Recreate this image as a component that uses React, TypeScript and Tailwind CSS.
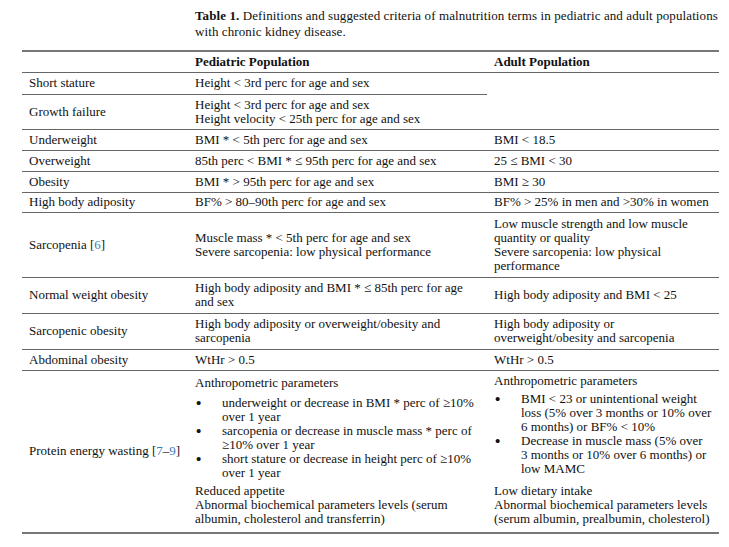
import type { ReactNode } from "react";

const line = "border-b border-[#666]";

function Ref({ children }: { children: ReactNode }) {
  return <span className="text-[#3b78b5]">{children}</span>;
}

function Lines({ lines }: { lines: ReactNode[] }) {
  return (
    <div>
      {lines.map((l, i) => (
        <div key={i} className="whitespace-nowrap">
          {l}
        </div>
      ))}
    </div>
  );
}

function Bullet({ lines }: { lines: ReactNode[] }) {
  return (
    <div className="flex">
      <span className="w-[27px] shrink-0 pl-[1px] text-[15px] font-bold leading-[14px]">•</span>
      <Lines lines={lines} />
    </div>
  );
}

interface Row {
  term: ReactNode;
  ped: ReactNode[];
  adult?: ReactNode[];
  h: string;
}

const rows: Row[] = [
  { term: "Underweight", ped: ["BMI * < 5th perc for age and sex"], adult: ["BMI < 18.5"], h: "h-[21px]" },
  { term: "Overweight", ped: ["85th perc < BMI * ≤ 95th perc for age and sex"], adult: ["25 ≤ BMI < 30"], h: "h-[21px]" },
  { term: "Obesity", ped: ["BMI * > 95th perc for age and sex"], adult: ["BMI ≥ 30"], h: "h-[21px]" },
  { term: "High body adiposity", ped: ["BF% > 80–90th perc for age and sex"], adult: ["BF% > 25% in men and >30% in women"], h: "h-[20px]" },
  {
    term: (
      <>
        Sarcopenia [<Ref>6</Ref>]
      </>
    ),
    ped: ["Muscle mass * < 5th perc for age and sex", "Severe sarcopenia: low physical performance"],
    adult: ["Low muscle strength and low muscle", "quantity or quality", "Severe sarcopenia: low physical", "performance"],
    h: "h-[65px]",
  },
  {
    term: "Normal weight obesity",
    ped: ["High body adiposity and BMI * ≤ 85th perc for age", "and sex"],
    adult: ["High body adiposity and BMI < 25"],
    h: "h-[36px]",
  },
  {
    term: "Sarcopenic obesity",
    ped: ["High body adiposity or overweight/obesity and", "sarcopenia"],
    adult: ["High body adiposity or", "overweight/obesity and sarcopenia"],
    h: "h-[36px]",
  },
  { term: "Abdominal obesity", ped: ["WtHr > 0.5"], adult: ["WtHr > 0.5"], h: "h-[21px]" },
];

export default function App() {
  return (
    <div className="min-h-[547px] w-[729px] bg-white font-['Liberation_Serif',serif] text-[13px] leading-[14px] text-[#111]">
      <div className="pl-[195px] pt-[8px] leading-[16px]">
        <div className="whitespace-nowrap tracking-[0.1px]">
          <b>Table 1.</b> Definitions and suggested criteria of malnutrition terms in pediatric and adult populations
        </div>
        <div className="tracking-[0.1px]">with chronic kidney disease.</div>
      </div>

      <table className="ml-[22px] mt-[10px] w-[697px] border-collapse border-y-2 border-[#777]">
        <colgroup>
          <col className="w-[166px]" />
          <col className="w-[299px]" />
          <col className="w-[232px]" />
        </colgroup>
        <tbody>
          <tr className={`h-[21px] ${line} border-[#222] font-bold`}>
            <td />
            <td className="px-[7px]">Pediatric Population</td>
            <td className="px-[7px]">Adult Population</td>
          </tr>
          <tr className="h-[22px]">
            <td className={`px-[7px] ${line} border-[#222]`}>Short stature</td>
            <td className={`px-[7px] ${line} border-[#222]`}>Height &lt; 3rd perc for age and sex</td>
            <td rowSpan={2} className={line} />
          </tr>
          <tr className="h-[35px]">
            <td className={`px-[7px] ${line}`}>Growth failure</td>
            <td className={`px-[7px] ${line}`}>
              <Lines lines={["Height < 3rd perc for age and sex", "Height velocity < 25th perc for age and sex"]} />
            </td>
          </tr>
          {rows.map((r, i) => (
            <tr key={i} className={`${r.h} ${line}`}>
              <td className="px-[7px]">{r.term}</td>
              <td className="px-[7px]">
                <Lines lines={r.ped} />
              </td>
              <td className="px-[7px]">{r.adult && <Lines lines={r.adult} />}</td>
            </tr>
          ))}
          <tr className="h-[163px]">
            <td className="px-[7px]">
              Protein energy wasting [<Ref>7</Ref>–<Ref>9</Ref>]
            </td>
            <td className="px-[7px] pt-[5px] align-top">
              <div>Anthropometric parameters</div>
              <div className="mt-[6px]">
                <Bullet lines={["underweight or decrease in BMI * perc of ≥10%", "over 1 year"]} />
                <Bullet lines={["sarcopenia or decrease in muscle mass * perc of", "≥10% over 1 year"]} />
                <Bullet lines={["short stature or decrease in height perc of ≥10%", "over 1 year"]} />
              </div>
              <div className="mt-[4px]">Reduced appetite</div>
              <div>Abnormal biochemical parameters levels (serum</div>
              <div>albumin, cholesterol and transferrin)</div>
            </td>
            <td className="px-[7px] pt-[3px] align-top">
              <div>Anthropometric parameters</div>
              <div className="mt-[4px]">
                <Bullet lines={["BMI < 23 or unintentional weight", "loss (5% over 3 months or 10% over", "6 months) or BF% < 10%"]} />
                <Bullet lines={["Decrease in muscle mass (5% over", "3 months or 10% over 6 months) or", "low MAMC"]} />
              </div>
              <div className="mt-[8px]">Low dietary intake</div>
              <div>Abnormal biochemical parameters levels</div>
              <div>(serum albumin, prealbumin, cholesterol)</div>
            </td>
          </tr>
        </tbody>
      </table>
    </div>
  );
}
